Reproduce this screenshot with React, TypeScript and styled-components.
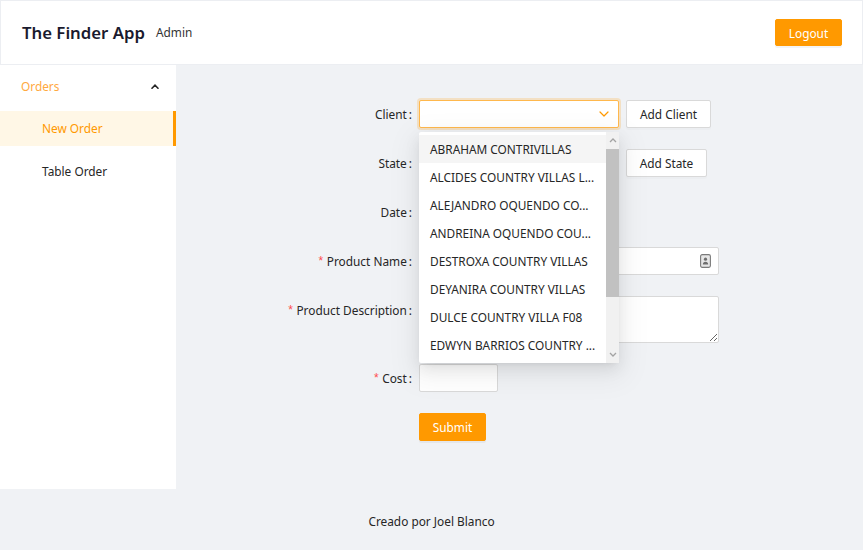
import React from "react";
import styled, { createGlobalStyle } from "styled-components";

const Global = createGlobalStyle`
  html, body { margin: 0; padding: 0; background: #f0f2f5; }
  body { font-family: "Noto Sans", "Open Sans", sans-serif; font-size: 11.85px; color: #262626; }
  * { box-sizing: border-box; }
`;

const ORANGE = "#ff9900";
const FS = "11.85px";

const Page = styled.div`
  width: 863px;
  height: 550px;
  display: flex;
  flex-direction: column;
  background: #f0f2f5;
  overflow: hidden;
`;

const Header = styled.header`
  height: 65px;
  flex: none;
  background: #fff;
  border: 1px solid #eceef2;
  display: flex;
  align-items: center;
  padding: 0 20px 0 21px;
`;

const Brand = styled.div`
  font-size: 16.75px;
  font-weight: 600;
  color: #1a1a2e;
`;

const Role = styled.div`
  margin-left: 11px;
  margin-top: -1px;
  font-size: ${FS};
  color: #333;
`;

const Spacer = styled.div`
  flex: 1;
`;

const PrimaryButton = styled.button<{ $w: number }>`
  width: ${(p) => p.$w}px;
  height: 27.5px;
  border: 1px solid ${ORANGE};
  background: ${ORANGE};
  color: #fff;
  font-family: inherit;
  font-size: ${FS};
  border-radius: 2px;
  padding: 0;
  box-shadow: 0 2px 0 rgba(0, 0, 0, 0.045);
`;

const Main = styled.div`
  height: 424px;
  flex: none;
  display: flex;
`;

const Sider = styled.aside`
  width: 176px;
  flex: none;
  background: #fff;
  padding-top: 3.5px;
`;

const SubTitle = styled.div`
  height: 35px;
  margin-bottom: 7px;
  display: flex;
  align-items: center;
  padding: 0 17px 0 21px;
  color: #ffa940;
  justify-content: space-between;
`;

const MenuItem = styled.div<{ $active?: boolean }>`
  height: 35px;
  margin: 0 0 7.5px;
  display: flex;
  align-items: center;
  padding-left: 42px;
  color: ${(p) => (p.$active ? ORANGE : "#262626")};
  background: ${(p) => (p.$active ? "#fff7e6" : "transparent")};
  border-right: 3px solid ${(p) => (p.$active ? ORANGE : "transparent")};
`;

const Content = styled.main`
  flex: 1;
  padding-top: 35px;
`;

const Form = styled.div`
  display: grid;
  grid-template-columns: 243px 300px;
  row-gap: 21px;
  align-items: start;
`;

const Label = styled.label`
  height: 28px;
  display: flex;
  align-items: center;
  justify-content: flex-end;
  padding-right: 7px;
  color: #262626;
  white-space: nowrap;
  &::after {
    content: ":";
    margin-left: 2px;
  }
`;

const Req = styled.span`
  color: #ff4d4f;
  margin-right: 3.5px;
  font-family: "Liberation Sans", sans-serif;
  font-size: 12px;
`;

const Control = styled.div`
  position: relative;
  display: flex;
  align-items: center;
  gap: 7px;
  min-height: 28px;
`;

const SelectBox = styled.div<{ $focus?: boolean }>`
  width: 200px;
  height: 28px;
  background: #fff;
  border: 1px solid ${(p) => (p.$focus ? "#ffb84d" : "#d9d9d9")};
  box-shadow: ${(p) => (p.$focus ? "0 0 0 2px rgba(255, 153, 0, 0.2)" : "none")};
  border-radius: 2px;
  display: flex;
  align-items: center;
  justify-content: flex-end;
  padding-right: 9px;
`;

const GhostButton = styled.button<{ $w: number }>`
  width: ${(p) => p.$w}px;
  height: 28px;
  background: #fff;
  border: 1px solid #d9d9d9;
  border-radius: 2px;
  font-family: inherit;
  font-size: ${FS};
  color: #262626;
  padding: 0;
  box-shadow: 0 2px 0 rgba(0, 0, 0, 0.015);
`;

const TextInput = styled.div<{ $w: number }>`
  width: ${(p) => p.$w}px;
  height: 28px;
  background: #fff;
  border: 1px solid #d9d9d9;
  border-radius: 2px;
  display: flex;
  align-items: center;
  justify-content: flex-end;
  padding-right: 7px;
`;

const TextArea = styled.textarea`
  width: 300px;
  height: 47px;
  background: #fff;
  border: 1px solid #d9d9d9;
  border-radius: 2px;
  resize: vertical;
  font-family: inherit;
  display: block;
  margin: 0;
`;

const Dropdown = styled.div`
  position: absolute;
  left: 0;
  top: 31.5px;
  width: 200px;
  height: 231px;
  background: #fff;
  border-radius: 2px;
  padding: 3.5px 0;
  z-index: 10;
  box-shadow: 0 3px 6px -4px rgba(0, 0, 0, 0.12), 0 6px 16px 0 rgba(0, 0, 0, 0.08),
    0 9px 28px 8px rgba(0, 0, 0, 0.05);
`;

const Option = styled.div<{ $active?: boolean }>`
  height: 28px;
  width: 187px;
  display: flex;
  align-items: center;
  padding: 0 8px 0 11px;
  background: ${(p) => (p.$active ? "#f5f5f5" : "transparent")};
  color: #262626;
  white-space: nowrap;
  overflow: hidden;
  text-overflow: ellipsis;
`;

const ScrollTrack = styled.div`
  position: absolute;
  right: 0;
  top: 0;
  bottom: 0;
  width: 13px;
  background: #f1f1f1;
  display: flex;
  flex-direction: column;
  align-items: center;
`;

const ScrollArrow = styled.div`
  height: 17px;
  flex: none;
  display: flex;
  align-items: center;
  justify-content: center;
`;

const ScrollThumb = styled.div`
  width: 13px;
  height: 148px;
  background: #c1c1c1;
  flex: none;
`;

const Footer = styled.footer`
  flex: 1;
  display: flex;
  align-items: center;
  justify-content: center;
  color: #262626;
  padding-top: 2px;
`;

const options = [
  "ABRAHAM CONTRIVILLAS",
  "ALCIDES COUNTRY VILLAS L...",
  "ALEJANDRO OQUENDO CO...",
  "ANDREINA OQUENDO COU...",
  "DESTROXA COUNTRY VILLAS",
  "DEYANIRA COUNTRY VILLAS",
  "DULCE COUNTRY VILLA F08",
  "EDWYN BARRIOS COUNTRY ...",
];

const ChevronDown = ({ color = ORANGE }: { color?: string }) => (
  <svg width="10" height="6" viewBox="0 0 10 6" fill="none">
    <path d="M1 1l4 4 4-4" stroke={color} strokeWidth="1.2" strokeLinecap="round" strokeLinejoin="round" />
  </svg>
);

const CaretUp = () => (
  <svg width="8" height="5" viewBox="0 0 8 5">
    <path d="M1 4.2L4 1.2l3 3" stroke="#262626" strokeWidth="1.6" fill="none" strokeLinecap="round" />
  </svg>
);

const TinyArrow = ({ up }: { up?: boolean }) => (
  <svg width="8" height="5" viewBox="0 0 8 5">
    <path d={up ? "M1 4L4 1l3 3" : "M1 1l3 3 3-3"} stroke="#a3a3a3" strokeWidth="1.3" fill="none" />
  </svg>
);

const ContactIcon = () => (
  <svg width="11" height="14" viewBox="0 0 11 14">
    <rect x="0.6" y="0.6" width="9.8" height="12.8" rx="1.6" fill="#e6e6e6" stroke="#7a7a7a" strokeWidth="1.1" />
    <circle cx="5.5" cy="5.2" r="1.6" fill="#6e6e6e" />
    <path d="M2.8 10.4c0-1.6 1.2-2.6 2.7-2.6s2.7 1 2.7 2.6z" fill="#6e6e6e" />
  </svg>
);

export default function App() {
  return (
    <>
      <Global />
      <Page>
        <Header>
          <Brand>The Finder App</Brand>
          <Role>Admin</Role>
          <Spacer />
          <PrimaryButton $w={67}>Logout</PrimaryButton>
        </Header>
        <Main>
          <Sider>
            <SubTitle>
              <span>Orders</span>
              <CaretUp />
            </SubTitle>
            <MenuItem $active>New Order</MenuItem>
            <MenuItem>Table Order</MenuItem>
          </Sider>
          <Content>
            <Form>
              <Label>Client</Label>
              <Control>
                <SelectBox $focus>
                  <ChevronDown />
                </SelectBox>
                <GhostButton $w={85}>Add Client</GhostButton>
                <Dropdown>
                  {options.map((o, i) => (
                    <Option key={o} $active={i === 0}>
                      {o}
                    </Option>
                  ))}
                  <ScrollTrack>
                    <ScrollArrow>
                      <TinyArrow up />
                    </ScrollArrow>
                    <ScrollThumb />
                    <Spacer />
                    <ScrollArrow>
                      <TinyArrow />
                    </ScrollArrow>
                  </ScrollTrack>
                </Dropdown>
              </Control>

              <Label>State</Label>
              <Control>
                <SelectBox>
                  <ChevronDown color="#bfbfbf" />
                </SelectBox>
                <GhostButton $w={81}>Add State</GhostButton>
              </Control>

              <Label>Date</Label>
              <Control>
                <TextInput $w={180} />
              </Control>

              <Label>
                <Req>*</Req>Product Name
              </Label>
              <Control>
                <TextInput $w={300}>
                  <ContactIcon />
                </TextInput>
              </Control>

              <Label>
                <Req>*</Req>Product Description
              </Label>
              <Control>
                <TextArea />
              </Control>

              <Label>
                <Req>*</Req>Cost
              </Label>
              <Control>
                <TextInput $w={79} />
              </Control>

              <div />
              <Control>
                <PrimaryButton $w={67}>Submit</PrimaryButton>
              </Control>
            </Form>
          </Content>
        </Main>
        <Footer>Creado por Joel Blanco</Footer>
      </Page>
    </>
  );
}
